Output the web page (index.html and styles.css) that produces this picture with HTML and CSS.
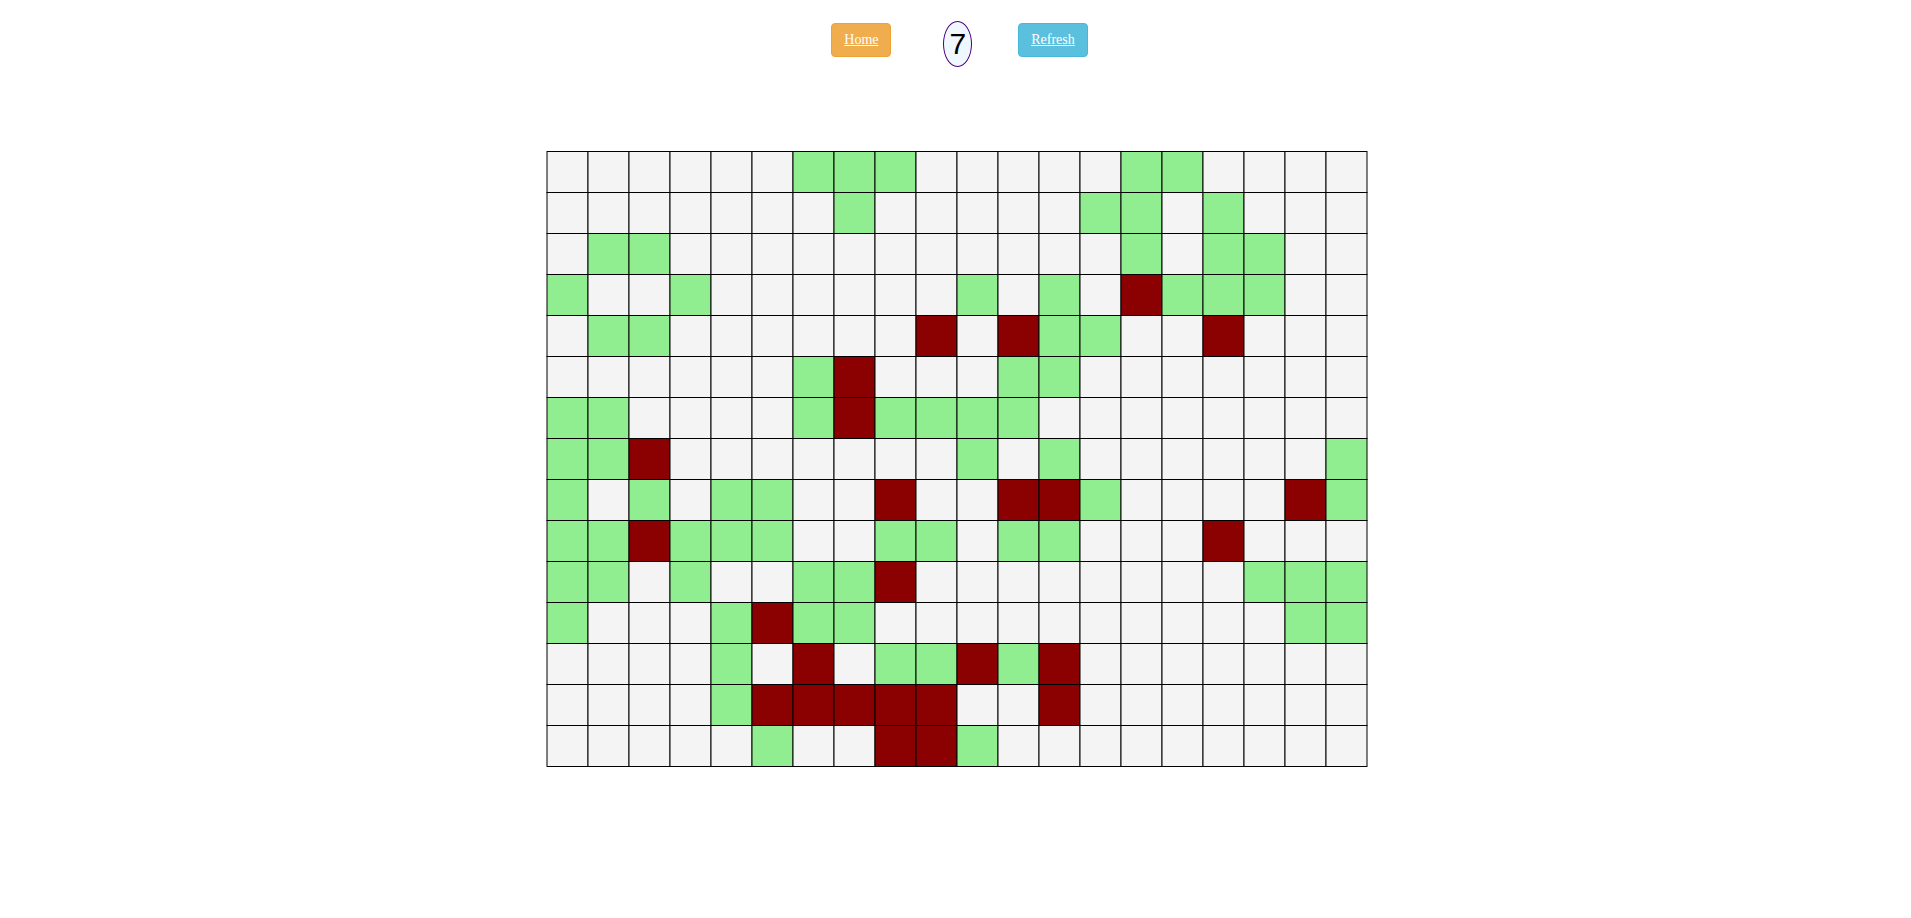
FILE: index.html
```
<!DOCTYPE html>
<html lang="en">
<head>
<meta charset="utf-8">
<title>Game of Life</title>
<link rel="stylesheet" href="styles.css">
</head>
<body>
<header class="toolbar">
<a class="btn btn-home" href="#">Home</a>
<output class="counter">7</output>
<a class="btn btn-refresh" href="#">Refresh</a>
</header>
<main class="stage">
<svg class="board" id="board" width="827" height="630" viewBox="0 0 827 630" role="img" aria-label="Board"></svg>
</main>
<script src="board.js"></script>
</body>
</html>
```
FILE: styles.css
```
body {
  margin: 0;
  background: #fff;
  font-family: "Liberation Serif", "Times New Roman", serif;
  font-size: 14px;
  line-height: 20px;
}
.toolbar {
  display: flex;
  justify-content: center;
  align-items: flex-start;
  padding: 21px 0 0 8px;
}
.btn {
  margin-top: 2px;
  padding: 6px 12px;
  border: 1px solid;
  border-radius: 4px;
  color: #fff;
  text-decoration: underline;
}
.btn-home {
  background: #f0ad4e;
  border-color: #eea236;
}
.btn-refresh {
  background: #5bc0de;
  border-color: #46b8da;
}
.counter {
  margin: 0 46px 0 52px;
  padding: 1px 5px;
  border: 1px solid indigo;
  border-radius: 50%;
  background: aliceblue;
  color: #000;
  font-family: "Liberation Sans", Arial, sans-serif;
  font-size: 30px;
  line-height: 42px;
}
.stage {
  display: flex;
  justify-content: center;
  padding-top: 81px;
}
.board {
  display: block;
}
.cell {
  fill: #f4f4f4;
  stroke: #000;
  stroke-width: 1px;
}
.cell-live {
  fill: lightgreen;
}
.cell-old {
  fill: darkred;
}
```
FILE: board.js
```
const rows = [
  "......ggg.....gg....",
  ".......g.....gg.g...",
  ".gg...........g.gg..",
  "g..g......g.g.rggg..",
  ".gg......r.rgg..r...",
  "......gr...gg.......",
  "gg....grgggg........",
  "ggr.......g.g......g",
  "g.g.gg..r..rrg....rg",
  "ggrggg..gg.gg...r...",
  "gg.g..ggr........ggg",
  "g...grgg..........gg",
  "....g.r.ggrgr.......",
  "....grrrrr..r.......",
  ".....g..rrg........."
];
const size = 41;
const left = 5;
const top0 = 3.5;
const classes = { ".": "cell", g: "cell cell-live", r: "cell cell-old" };
const board = document.getElementById("board");

rows.forEach((row, r) => {
  [...row].forEach((state, c) => {
    const rect = document.createElementNS("http://www.w3.org/2000/svg", "rect");
    rect.setAttribute("x", left + c * size);
    rect.setAttribute("y", top0 + r * size);
    rect.setAttribute("width", size);
    rect.setAttribute("height", size);
    rect.setAttribute("class", classes[state]);
    board.appendChild(rect);
  });
});
```
